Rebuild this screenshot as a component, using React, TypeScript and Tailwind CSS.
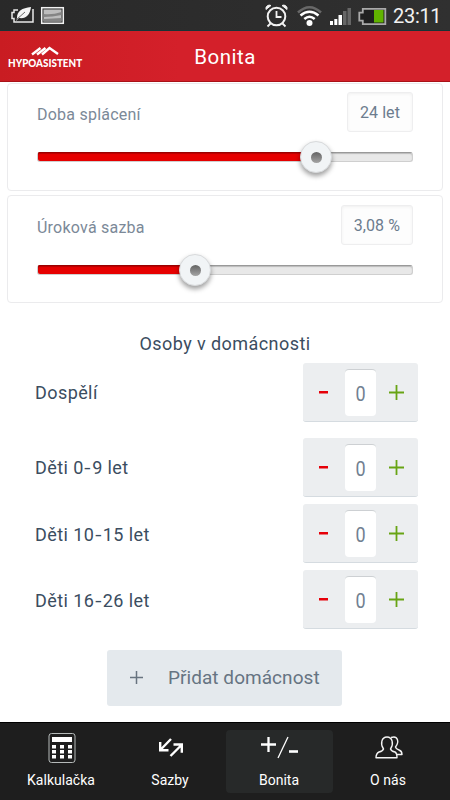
import React from 'react';

function StatusBar() {
  return (
    <div className="flex h-[31px] items-center bg-linear-to-r from-[#292929] to-[#303030] border-b border-[#173436]">
      <svg width="70" height="30" viewBox="0 0 70 30" fill="none">
        <path d="M18 10H14v2.500h-2v6h2v3.500h19V9" stroke="#e8e8e8" strokeWidth="1.500" />
        <path d="M17 18C17 11 22 8 31 7C30 15 26 19 19 18L16 21Z" fill="#f4f4f4" />
        <path d="M16 20L25 12" stroke="#444" strokeWidth=".8" />
        <rect x="41.700" y="7.700" width="21.600" height="15.600" fill="#333" stroke="#f2f2f2" strokeWidth="1.500" />
        <rect x="43.500" y="9.500" width="18" height="12" fill="#bdbdbd" />
        <path d="M43.500 14q9 1 18-2v3q-9 2-18 2zM43.500 19l18-1v3.500h-18z" fill="#858585" />
      </svg>
      <div className="flex-1" />
      <svg width="124" height="30" viewBox="264 0 124 30" fill="none">
        <circle cx="276.500" cy="16.500" r="8.800" stroke="#f2f2f2" strokeWidth="2" />
        <path d="M276.500 11v6h5M270.500 23.500l-3 3M282.500 23.500l3 3" stroke="#f2f2f2" strokeWidth="1.800" />
        <path d="M266 9.500a3.500 3.500 0 0 1 5-4zM287 9.500a3.500 3.500 0 0 0-5-4z" fill="#f2f2f2" stroke="#f2f2f2" />
        <path d="M298 12.500Q309.500 2 321 12.500" stroke="#686868" strokeWidth="2.600" />
        <path d="M300.500 15.500Q309.500 8 318.500 15.500M304.300 19Q309.500 14.500 314.700 19" stroke="#fff" strokeWidth="2.500" />
        <circle cx="309.500" cy="23" r="3" fill="#fff" />
        <path d="M330 21h3v4h-3zM334.300 19h3v6h-3zM338.500 15h3.500v10h-3.500z" fill="#fff" />
        <path d="M343 11h3.500v14H343zM347.500 8h3.500v17h-3.500z" fill="#666" />
        <path d="M362.800 8.900h22.500v15.200h-22.500v-3.500h-3.500v-8h3.500z" fill="#202020" stroke="#aaa" strokeWidth="1.800" />
        <rect x="374" y="10" width="9.500" height="12.500" fill="#61b300" />
      </svg>
      <span className="ml-[5px] w-[57px] whitespace-nowrap pt-px text-[20px] leading-[30px] tracking-[-0.3px] text-[#f2f2f2]">23:11</span>
    </div>
  );
}

function Header() {
  return (
    <header className="grid h-[51px] grid-cols-[90px_1fr_90px] border-b border-[#a91218] bg-linear-to-r from-[#c91c22] to-[#d4202a] to-40% text-white">
      <div className="flex flex-col pl-2 pt-[15px]">
        <svg className="ml-[23px]" width="29" height="10" viewBox="0 0 29 10" fill="none" stroke="#fff" strokeWidth="2.400">
          <path d="M1 8.500L9.500 2M6 8.500L14.500 2M11 8.500L18.500 2L27 8" />
        </svg>
        <span className="w-fit origin-left scale-x-[0.94] whitespace-nowrap font-['Lato',sans-serif] text-[10.500px] leading-[14px] font-black">HYPOASISTENT</span>
      </div>
      <h1 className="text-center text-[20.500px] leading-[53px] tracking-[0.500px]">Bonita</h1>
    </header>
  );
}

function SliderCard({ label, value, fill, pad }: { label: string; value: string; fill: number; pad: string }) {
  return (
    <section className="mx-[7px] h-[108px] rounded-[4px] border border-[#ebebed] bg-white pl-[29px] pr-[29px]">
      <div className={`flex items-start justify-between ${pad}`}>
        <span className="mt-[13px] text-[16px] leading-5 tracking-[0.230px] text-[#7b8998]">{label}</span>
        <span className="h-10 rounded-[3px] border border-[#eeeeef] bg-[#fdfdfd] px-3 text-[16px] leading-[39px] tracking-[0.080px] text-[#6c7c8e] shadow-[inset_0_1px_3px_#f0f0f0]">{value}</span>
      </div>
      <div className="mt-[20px] h-[10px] rounded-[3px] border border-[#cfcfcf] border-t-[#999] bg-[#e8e8e8] shadow-[inset_0_1px_1px_#bbb]">
        <div className="relative h-[9px] -mt-px rounded-l-[2px] bg-[#e60000] shadow-[inset_0_1.500px_1px_#970000]" style={{ width: fill }}>
          <div className="absolute -right-4 -top-[11px] flex size-8 items-center justify-center rounded-full border border-[#d8dadc] bg-[#f1f4f6] shadow-[0_3px_5px_rgba(0,0,0,.38)]">
            <div className="size-[11px] rounded-full bg-linear-to-b from-[#636363] to-[#a5a5a5]" />
          </div>
        </div>
      </div>
    </section>
  );
}

function PersonRow({ label, gap, shift }: { label: string; gap: string; shift?: boolean }) {
  const [start, end] = label.split('-');
  return (
    <div className={`flex h-[59px] items-center justify-between pl-[35px] pr-8 ${gap}`}>
      <span className={`text-[18px] leading-[58px] tracking-[0.420px] text-[#3b4d5f] ${shift ? 'pt-[2px]' : ''}`}>
        {start}
        {end && <span className="mx-[1.500px] inline-block scale-x-125">-</span>}
        {end}
      </span>
      <div className="flex h-[59px] w-[115px] items-center rounded-[3px] border-b border-[#d5dbe0] bg-[#eceef0]">
        <button className="flex w-[42px] justify-center pr-[2px]" aria-label="minus">
          <svg width="9" height="3"><rect width="9" height="2.500" fill="#e60009" /></svg>
        </button>
        <span className="h-[47px] w-[31px] rounded-[4px] border-t border-[#cdd0d3] bg-white text-center text-[20px] leading-[48px] text-[#718091]">
          <span className="inline-block scale-x-90">0</span>
        </span>
        <button className="flex w-[42px] justify-center pr-px" aria-label="plus">
          <svg width="15" height="15" viewBox="0 0 15 15"><path d="M7.500 0v15M0 7.500h15" stroke="#68a414" strokeWidth="1.800" /></svg>
        </button>
      </div>
    </div>
  );
}

function NavItem({ label, active, children }: { label: string; active?: boolean; children: React.ReactNode }) {
  return (
    <div className={`flex h-[63px] w-[107px] flex-col items-center rounded-[4px] text-white ${active ? 'bg-[#272929]' : ''}`}>
      <div className="h-[42px]">{children}</div>
      <span className="pr-px text-[14px] leading-4 tracking-[0.020px]">{label}</span>
    </div>
  );
}

export default function App() {
  return (
    <div className="flex h-[800px] w-[450px] flex-col overflow-hidden bg-white font-['Roboto',sans-serif]">
      <StatusBar />
      <Header />
      <main className="flex h-[640px] flex-col pt-px">
        <SliderCard label="Doba splácení" value="24 let" fill={278} pad="pt-[8px]" />
        <div className="h-[4px] shrink-0" />
        <SliderCard label="Úroková sazba" value="3,08 %" fill={157} pad="pt-[9px]" />
        <h2 className="mt-[30px] text-center text-[18px] leading-[22px] tracking-[0.430px] text-[#3b4d5f]">Osoby v domácnosti</h2>
        <PersonRow label="Dospělí" gap="mt-[8px]" />
        <PersonRow label="Děti 0-9 let" gap="mt-[16px]" />
        <PersonRow label="Děti 10-15 let" gap="mt-[7px]" shift />
        <PersonRow label="Děti 16-26 let" gap="mt-[7px]" shift />
        <button className="mt-[21px] ml-[107px] flex h-[56px] w-[235px] items-center rounded-[3px] bg-[#e4e9ed] pl-[23px] text-[19px] tracking-[0.050px] text-[#667482]">
          <svg className="mr-[24px]" width="14" height="14" viewBox="0 0 14 14"><path d="M6.500 0v13M0 6.500h13" stroke="#687480" strokeWidth="1.500" /></svg>
          Přidat domácnost
        </button>
      </main>
      <nav className="flex h-[78px] gap-[2px] border-t border-black bg-[#1e1e1e] pl-2 pt-[7px]">
        <NavItem label="Kalkulačka">
          <svg width="28" height="34" viewBox="0 0 28 34">
            <rect x="1" y="3.500" width="26" height="29" rx="2.500" fill="none" stroke="#b5bab9" />
            <path d="M4 7h20v5H4z" fill="#fff" />
            {[15, 20, 25].map((y) => [4, 12, 20].map((x) => <rect key={`${x}-${y}`} x={x} y={y} width="4" height="3.500" fill="#fff" />))}
          </svg>
        </NavItem>
        <NavItem label="Sazby">
          <svg width="26" height="32" viewBox="0 0 26 32" fill="none" stroke="#fff" strokeWidth="2.400">
            <path d="M13 9L2.800 19.500M2.200 12v8.300h8.300M12.500 26L23.500 15M15.500 14.500h8.300v8.300" />
          </svg>
        </NavItem>
        <NavItem label="Bonita" active>
          <svg width="38" height="32" viewBox="0 0 38 32" stroke="#fff" fill="none">
            <path d="M7.500 7v15M0 14.500h15" strokeWidth="2.300" />
            <path d="M17 28L27 7" strokeWidth="1.300" />
            <path d="M28 21.500h9" strokeWidth="2.600" />
          </svg>
        </NavItem>
        <NavItem label="O nás">
          <svg width="28" height="32" viewBox="0 0 28 32" stroke="#f4f4f4" fill="none" strokeWidth="1.400" strokeLinejoin="round">
            <path d="M1 27.800Q1 23.500 4 22Q8 21 8.500 19C5 14 6.500 7 12 7S19 14 15.500 19Q16 21 20 22Q22 23 22 27.800Z" />
            <path d="M16 7.500C23 5 24.500 12 20.500 17Q21 19 24 20Q27 21 27 24.500H22" />
          </svg>
        </NavItem>
      </nav>
    </div>
  );
}
